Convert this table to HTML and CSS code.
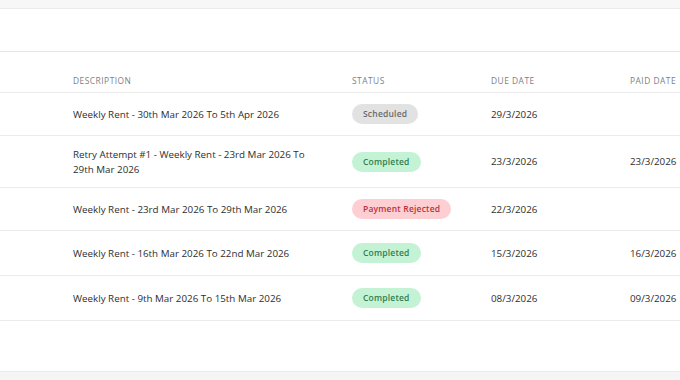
FILE: index.html
```html
<!DOCTYPE html>
<html>
<head>
<meta charset="utf-8">
<link rel="stylesheet" href="styles.css">
</head>
<body>
<div class="topband"></div>
<div class="card">
  <div class="cardhead"></div>
  <div class="table">
    <div class="row head">
      <div class="cell">Description</div>
      <div class="cell">Status</div>
      <div class="cell">Due Date</div>
      <div class="cell">Paid Date</div>
    </div>
    <div class="row">
      <div class="cell">Weekly Rent - 30th Mar 2026 To 5th Apr 2026</div>
      <div class="cell"><span class="badge grey">Scheduled</span></div>
      <div class="cell">29/3/2026</div>
      <div class="cell"></div>
    </div>
    <div class="row tall">
      <div class="cell desc">Retry Attempt #1 - Weekly Rent - 23rd Mar 2026 To 29th Mar 2026</div>
      <div class="cell"><span class="badge green">Completed</span></div>
      <div class="cell">23/3/2026</div>
      <div class="cell">23/3/2026</div>
    </div>
    <div class="row">
      <div class="cell">Weekly Rent - 23rd Mar 2026 To 29th Mar 2026</div>
      <div class="cell"><span class="badge red">Payment Rejected</span></div>
      <div class="cell">22/3/2026</div>
      <div class="cell"></div>
    </div>
    <div class="row r45">
      <div class="cell">Weekly Rent - 16th Mar 2026 To 22nd Mar 2026</div>
      <div class="cell"><span class="badge green">Completed</span></div>
      <div class="cell">15/3/2026</div>
      <div class="cell">16/3/2026</div>
    </div>
    <div class="row r45">
      <div class="cell">Weekly Rent - 9th Mar 2026 To 15th Mar 2026</div>
      <div class="cell"><span class="badge green">Completed</span></div>
      <div class="cell">08/3/2026</div>
      <div class="cell">09/3/2026</div>
    </div>
  </div>
</div>
<div class="bottomband"></div>
</body>
</html>
```
FILE: styles.css
```css
html, body {
  margin: 0;
  padding: 0;
  background: #fff;
  width: 680px;
  height: 380px;
  overflow: hidden;
  font-family: "Open Sans", "Noto Sans", sans-serif;
  color: #2e2e2e;
}
.topband {
  height: 8px;
  background: #f7f7f8;
  border-bottom: 1px solid #ececec;
}
.card {
  height: 362px;
  background: #fff;
}
.cardhead {
  height: 42px;
  border-bottom: 1px solid #e6e6e6;
}
.table {
  display: flex;
  flex-direction: column;
  overflow: hidden;
}
.row {
  display: grid;
  grid-template-columns: 279px 139px 139px minmax(0, 1fr);
  padding-left: 73px;
  height: 42px;
  align-items: center;
  border-bottom: 1px solid #ebebeb;
  font-size: 9.8px;
  white-space: nowrap;
}
.row.head {
  height: 41px;
  font-size: 8.4px;
  line-height: 11px;
  letter-spacing: 0.5px;
  text-transform: uppercase;
  color: #7b7f84;
  align-items: end;
  padding-bottom: 6px;
  box-sizing: border-box;
}
.row.tall { height: 51px; }
.row.r45 { height: 44px; }
.cell.desc {
  white-space: normal;
  line-height: 15px;
  padding-right: 40px;
}
.badge {
  display: inline-block;
  font-size: 8.5px;
  font-weight: 600;
  line-height: 20px;
  height: 20px;
  padding: 0 11px;
  border-radius: 10px;
  letter-spacing: 0.2px;
}
.badge.grey { background: #e2e2e2; color: #6a6a6a; }
.badge.green { background: #c3f3d4; color: #2f7d4f; }
.badge.red { background: #fdcfd3; color: #b8323d; }
.bottomband {
  height: 10px;
  background: #f5f5f6;
  border-top: 1px solid #ececec;
}
```
